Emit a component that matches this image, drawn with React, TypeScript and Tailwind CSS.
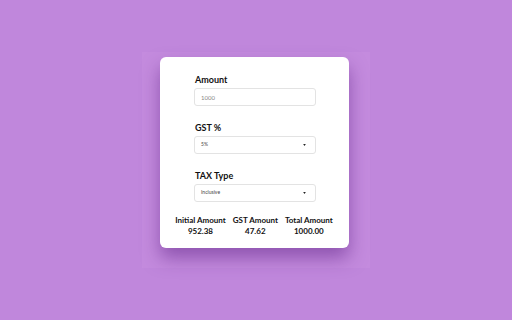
import React from 'react'

function Field({ label, children }: { label: string; children: React.ReactNode }) {
  return (
    <div className="flex flex-col">
      <label className="pl-[35px] text-[9px] leading-[12px] font-bold text-[#111]">{label}</label>
      <div className="pl-[34px] mt-[2px]">{children}</div>
    </div>
  )
}

function SelectBox({ value }: { value: string }) {
  return (
    <div className="w-[122px] h-[18px] rounded-[3px] border border-[#e3e3e3] flex items-center justify-between pl-[6px] pr-[9px]">
      <span className="text-[5px] text-[#444]">{value}</span>
      <svg width="3" height="2" viewBox="0 0 4 3"><path d="M0 0 L4 0 L2 3 Z" fill="#222" /></svg>
    </div>
  )
}

function Result({ label, value }: { label: string; value: string }) {
  return (
    <div className="flex flex-col items-center">
      <span className="text-[8px] leading-[11px] font-bold text-[#111]">{label}</span>
      <span className="text-[8px] leading-[11px] font-bold text-[#111]">{value}</span>
    </div>
  )
}

export default function App() {
  return (
    <div className="w-[512px] h-[320px] bg-[#c087dc] flex items-center justify-center" style={{ fontFamily: 'Lato, "Noto Sans", sans-serif' }}>
      <div className="w-[228px] h-[216px] bg-[#c48bde] pt-[5px] pl-[18px]">
        <div className="w-[189px] h-[191px] bg-white rounded-[6px] shadow-[0_10px_18px_rgba(90,30,130,0.5)] pt-[17px] flex flex-col gap-[16px]">
          <Field label="Amount">
            <div className="w-[122px] h-[18px] rounded-[3px] border border-[#e3e3e3] flex items-center pl-[6px]">
              <span className="text-[6px] text-[#888]">1000</span>
            </div>
          </Field>
          <Field label="GST %">
            <SelectBox value="5%" />
          </Field>
          <div className="flex flex-col">
            <Field label="TAX Type">
              <SelectBox value="Inclusive" />
            </Field>
            <div className="mt-[13px] flex justify-center gap-[7px] pr-[1px]">
              <Result label="Initial Amount" value="952.38" />
              <Result label="GST Amount" value="47.62" />
              <Result label="Total Amount" value="1000.00" />
            </div>
          </div>
        </div>
      </div>
    </div>
  )
}
